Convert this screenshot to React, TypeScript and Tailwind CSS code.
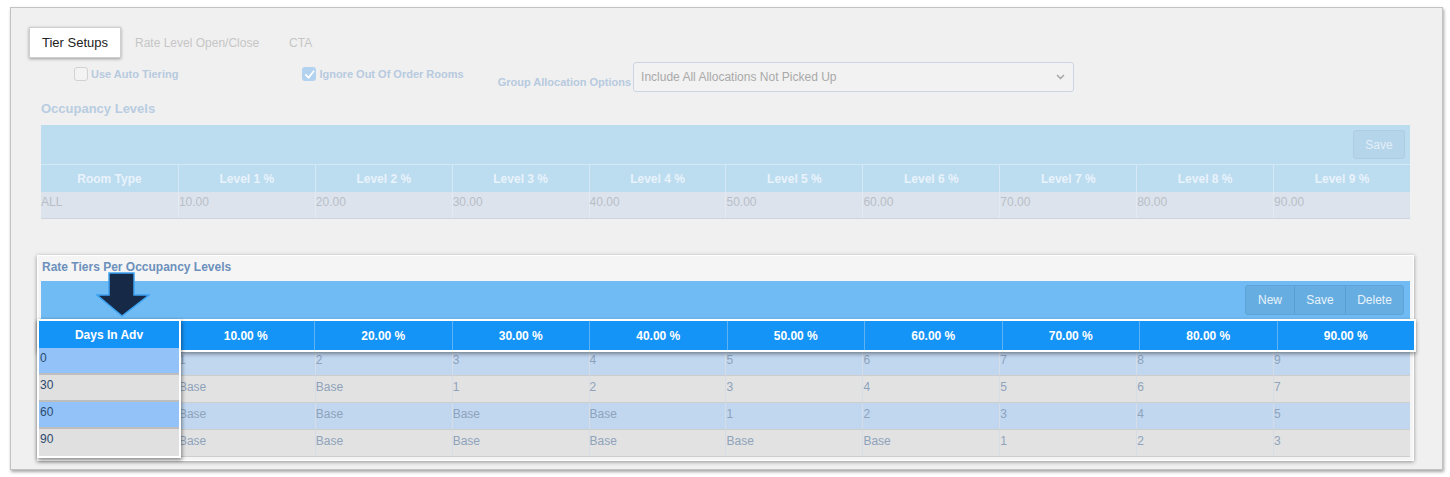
import React from 'react';

const levels = ['Level 1 %', 'Level 2 %', 'Level 3 %', 'Level 4 %', 'Level 5 %', 'Level 6 %', 'Level 7 %', 'Level 8 %', 'Level 9 %'];
const levelValues = ['10.00', '20.00', '30.00', '40.00', '50.00', '60.00', '70.00', '80.00', '90.00'];

const tierRows = [
    { days: '0', cells: ['1', '2', '3', '4', '5', '6', '7', '8', '9'] },
    { days: '30', cells: ['Base', 'Base', '1', '2', '3', '4', '5', '6', '7'] },
    { days: '60', cells: ['Base', 'Base', 'Base', 'Base', '1', '2', '3', '4', '5'] },
    { days: '90', cells: ['Base', 'Base', 'Base', 'Base', 'Base', 'Base', '1', '2', '3'] },
];

function Checkbox({ checked }: { checked?: boolean }) {
    if (checked) {
        return (
            <span className="w-[14px] h-[14px] rounded-[3px] bg-[#b3d2f0] flex items-center justify-center">
                <svg width="11" height="11" viewBox="0 0 12 12">
                    <path d="M2 6.5 L5 9.5 L10.5 2.5" fill="none" stroke="#ffffff" strokeWidth="2" strokeLinecap="round" strokeLinejoin="round" />
                </svg>
            </span>
        );
    }
    return <span className="w-[14px] h-[14px] rounded-[3px] border border-[#d2d2d2] bg-[#f3f3f3]" />;
}

export default function App() {
    return (
        <div className="min-h-screen bg-white pt-[7px] pl-[10px]" style={{ fontFamily: '"Liberation Sans", Arial, sans-serif' }}>
            <div className="w-[1433px] h-[463px] bg-[#f0f0f0] border border-[#c2c2c2] shadow-[1px_2px_3px_rgba(0,0,0,0.35)] pt-[19px]">
                {/* Tabs */}
                <div className="flex items-center pl-[18px]">
                    <div className="h-[31px] px-[12px] flex items-center bg-white border border-[#cfcfcf] shadow-[0_1px_3px_rgba(0,0,0,0.35)] text-[13px] text-[#222]">
                        Tier Setups
                    </div>
                    <span className="ml-[14px] mt-[1px] text-[12px] text-[#c6c6c6]">Rate Level Open/Close</span>
                    <span className="ml-[30px] mt-[1px] text-[12px] text-[#c6c6c6]">CTA</span>
                </div>

                {/* Options row */}
                <div className="flex items-start mt-[4px] h-[30px]">
                    <label className="ml-[63px] mt-[4px] flex items-center gap-[3px] text-[11px] font-bold text-[#b7cadf]">
                        <Checkbox />
                        Use Auto Tiering
                    </label>
                    <label className="ml-[124px] mt-[4px] flex items-center gap-[3px] text-[11px] font-bold text-[#b7cadf]">
                        <Checkbox checked />
                        Ignore Out Of Order Rooms
                    </label>
                    <span className="ml-[34px] mt-[12px] text-[11px] font-bold text-[#b7cadf]">Group Allocation Options</span>
                    <div className="ml-[2px] w-[441px] h-[30px] rounded-[3px] border border-[#cbd5e2] bg-[#f2f2f2] flex items-center justify-between pl-[7px] pr-[8px]">
                        <span className="text-[12px] text-[#a9a9a9]">Include All Allocations Not Picked Up</span>
                        <svg width="9" height="6" viewBox="0 0 9 6">
                            <path d="M1 1 L4.5 4.5 L8 1" fill="none" stroke="#a0a0a0" strokeWidth="1.3" />
                        </svg>
                    </div>
                </div>

                <div className="pl-[30px] w-[1399px]">
                    <div className="mt-[9px] text-[13px] font-bold text-[#b8cde1] leading-[15px]">Occupancy Levels</div>

                    {/* Occupancy levels table */}
                    <div className="mt-[9px] w-[1369px]">
                        <div className="h-[40px] bg-[#bcdcf0] flex items-center justify-end pr-[5px] border-b border-[#d4e8f6]">
                            <div className="h-[29px] w-[52px] rounded-[3px] bg-[#b5d5eb] border border-[#afcde2] flex items-center justify-center text-[12px] text-[#e3eef7]">
                                Save
                            </div>
                        </div>
                        <div className="grid grid-cols-10 h-[27px] bg-[#bcdcf0]">
                            {['Room Type', ...levels].map((h, i) => (
                                <div key={h} className={`flex items-center justify-center text-[12px] font-bold text-[#e9f3fb] ${i > 0 ? 'border-l border-[#d4e8f6]' : ''}`}>
                                    {h}
                                </div>
                            ))}
                        </div>
                        <div className="grid grid-cols-10 h-[27px] bg-[#dce3ed] border-b border-[#cdd5df]">
                            {['ALL', ...levelValues].map((v, i) => (
                                <div key={i} className={`pt-[1px] text-[12px] text-[#b9bec6] ${i > 0 ? 'border-l border-[#e4eaf1]' : ''}`}>
                                    {v}
                                </div>
                            ))}
                        </div>
                    </div>

                    {/* Rate tiers panel */}
                    <div className="relative mt-[36px] -ml-[4px] w-[1377px] bg-[#f5f5f5] border border-white shadow-[0_1px_4px_rgba(0,0,0,0.4)] px-[3px] pt-[3px] pb-[3px]">
                        <div className="text-[12px] font-bold text-[#6c90bc] leading-[16px] pl-[1px]">Rate Tiers Per Occupancy Levels</div>

                        <div className="relative mt-[6px]">
                            <div className="h-[38px] bg-[#70bbf3] flex items-center justify-end pr-[6px]">
                                <div className="flex h-[30px] rounded-[3px] border border-[#5fa4d8] bg-[#66ade1] text-[12px] text-[#e8f3fb]">
                                    <span className="w-[48px] flex items-center justify-center">New</span>
                                    <span className="w-[51px] flex items-center justify-center border-l border-[#5a9fd3]">Save</span>
                                    <span className="w-[58px] flex items-center justify-center border-l border-[#5a9fd3]">Delete</span>
                                </div>
                            </div>

                            {/* Raised header row */}
                            <div className="relative z-10 -ml-[4px] -mr-[6px] h-[33px] border-2 border-white bg-[#1594f8] shadow-[0_2px_4px_rgba(0,0,0,0.4)] grid grid-cols-10 -mb-[3px]">
                                {['Days In Adv', ...levelValues.map(v => `${v} %`)].map((h, i) => (
                                    <div key={h} className={`flex items-center justify-center text-[12px] font-bold text-white ${i > 0 ? 'border-l border-[#5fb3f5]' : ''}`}>
                                        {i === 0 ? '' : h}
                                    </div>
                                ))}
                            </div>

                            {tierRows.map((row, r) => (
                                <div key={row.days} className={`grid grid-cols-10 h-[27px] border-b border-[#cdcdcd] ${r % 2 === 0 ? 'bg-[#c1d7f0]' : 'bg-[#e2e2e2]'}`}>
                                    <div />
                                    {row.cells.map((c, i) => (
                                        <div key={i} className="pt-[2px] text-[12px] text-[#8ea3bb] border-l border-[#d6dde6]">
                                            {c}
                                        </div>
                                    ))}
                                </div>
                            ))}

                            {/* Raised Days In Adv column */}
                            <div className="absolute z-20 left-[-4px] top-[38px] w-[144px] border-2 border-white bg-[#e0e0e0] shadow-[1px_2px_4px_rgba(0,0,0,0.45)]">
                                <div className="h-[27px] bg-[#1594f8] flex items-center justify-center text-[12px] font-bold text-white">Days In Adv</div>
                                {tierRows.map((row, r) => (
                                    <div key={row.days} className={`h-[27px] pl-[1px] pt-[1px] text-[12px] text-[#2c4a6c] border-b-2 border-[#bdbdbd] last:border-b-0 ${r % 2 === 0 ? 'bg-[#93c2f8]' : 'bg-[#e0e0e0]'}`}>
                                        {row.days}
                                    </div>
                                ))}
                            </div>
                        </div>

                        {/* Annotation arrow */}
                        <svg className="absolute z-30 left-[58px] top-[16px]" width="54" height="46" viewBox="0 0 54 46">
                            <path d="M13 1 H38 V23 H53 L26 44 L1 23 H13 Z" fill="#162a48" stroke="#3ea3f2" strokeWidth="1.5" strokeLinejoin="miter" />
                        </svg>
                    </div>
                </div>
            </div>
        </div>
    );
}
